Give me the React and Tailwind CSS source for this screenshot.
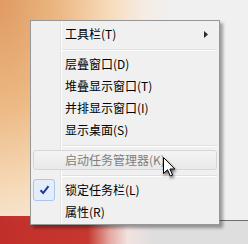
import React from 'react';

const items = [
    { label: '工具栏(T)', submenu: true },
    { sep: true },
    { label: '层叠窗口(D)' },
    { label: '堆叠显示窗口(T)' },
    { label: '并排显示窗口(I)' },
    { label: '显示桌面(S)' },
    { sep: true },
    { label: '启动任务管理器(K)', disabled: true },
    { sep: true },
    { label: '锁定任务栏(L)', checked: true },
    { label: '属性(R)' },
];

const MenuRow = ({ item }) => {
    if (item.sep) {
        return (
            <div className="h-[8px] pt-[4px] ml-[29px]">
                <div className="h-px bg-[#e0e0e0]" />
                <div className="h-px bg-white" />
            </div>
        );
    }
    return (
        <div
            className={`relative flex items-center h-[22px] pl-[32px] pr-3 ${
                item.disabled ? 'text-[#7f7f7f]' : 'text-black'
            }`}
        >
            {item.disabled && (
                <div className="absolute inset-x-0 top-[1px] bottom-[1px] rounded-[3px] border border-[#d6d6d6] bg-[linear-gradient(#f4f4f4,#e9e9e9)]" />
            )}
            {item.checked && (
                <div className="absolute left-0 top-0 w-[22px] h-[22px] rounded-[3px] border border-[#a9c6ec] bg-[#e4eefb] flex items-center justify-center">
                    <svg width="11" height="10" viewBox="0 0 11 10">
                        <path d="M1.5 5.2 L4.2 8 L9.5 1.2" fill="none" stroke="#1b3a9e" strokeWidth="2" />
                    </svg>
                </div>
            )}
            <span className="relative leading-none">{item.label}</span>
            {item.submenu && (
                <svg className="absolute right-[9px] top-[8px]" width="4" height="7" viewBox="0 0 4 7">
                    <path d="M0 0 L4 3.5 L0 7 Z" fill="#2b2b2b" />
                </svg>
            )}
        </div>
    );
};

const App = () => {
    return (
        <div
            className="relative w-[248px] h-[244px] overflow-hidden pt-[20px] pl-[30px] font-['Noto_Sans_CJK_SC','Noto_Sans',sans-serif] text-[12px] [background:linear-gradient(to_right,transparent_150px,#6f6f6f_150px)_0_220px/100%_1px_no-repeat,linear-gradient(to_right,#c22f2a,#c6372f_88px,#e4a9a3_110px,#f2e2e0_128px,#dedede_155px)_0_221px/100%_23px_no-repeat,linear-gradient(to_right,#c22f2a,#c9413a_80px,#e8b9b3_108px,transparent_130px)_0_216px/100%_5px_no-repeat,radial-gradient(ellipse_170px_300px_at_0_0,#df9a62,#ecb883_35%,#f7dcbc_65%,#f4ece4_85%,#f0f0f0)]"
        >
            <div className="w-[190px] border border-[#979797] pt-[2px] pb-[1px] px-[2px] shadow-[3px_3px_3px_rgba(0,0,0,0.35)] bg-[#f0f0f0] bg-[linear-gradient(to_right,#f0f0f0_29px,#e2e3e3_29px,#e2e3e3_30px,#ffffff_30px,#ffffff_31px,#f0f0f0_31px)]">
                {items.map((item, index) => (
                    <MenuRow key={index} item={item} />
                ))}
            </div>

            {/* mouse pointer */}
            <svg
                className="absolute left-[163px] top-[157px] drop-shadow-[1px_2px_1.5px_rgba(0,0,0,0.6)]"
                width="14"
                height="21"
                viewBox="0 0 14 21"
            >
                <path
                    d="M0.5 0.5 L0.5 16.5 L4.5 12.8 L7.3 19 L9.6 18 L6.9 12 L11.8 12 Z"
                    fill="#ffffff"
                    stroke="#000000"
                    strokeWidth="1"
                />
            </svg>
        </div>
    );
};

export default App;
